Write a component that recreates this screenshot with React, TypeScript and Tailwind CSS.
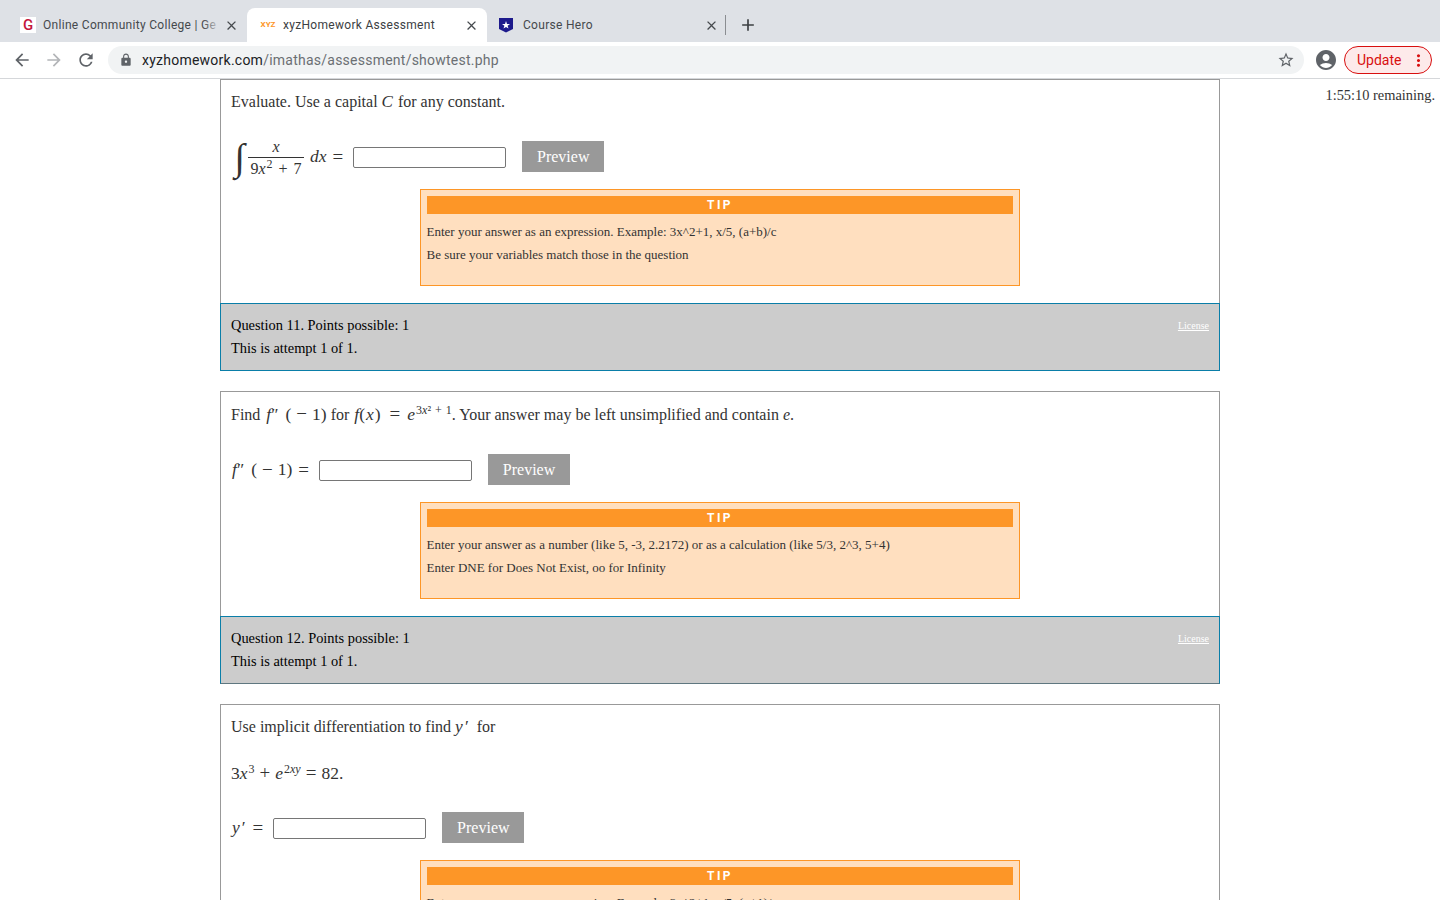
import { MdAccountCircle, MdAdd, MdArrowBack, MdArrowForward, MdClose, MdLock, MdMoreVert, MdRefresh, MdStarBorder } from "react-icons/md";
import type { ReactNode } from "react";

const V = ({ children }: { children: ReactNode }) => <i className="italic">{children}</i>;
const Sup = ({ children }: { children: ReactNode }) => (
  <span className="text-[12px] leading-none relative -top-[6px] ml-[1px]">{children}</span>
);
// operators in the math have the wide spacing of the typeset formula
const Op = ({ children }: { children: ReactNode }) => <span className="mx-[5px] text-[19px] leading-none">{children}</span>;

const Tip = ({ lines }: { lines: string[] }) => (
  <div className="mx-auto w-[600px] h-[97px] bg-[#ffdfbf] border border-[#fd9627] px-[6px] pt-[6px]">
    <div className="h-[18px] bg-[#fd9627] text-white text-center font-['Roboto',sans-serif] font-bold text-[12px] leading-[18px] tracking-[0.2em]">
      TIP
    </div>
    <div className="pt-[6px] -ml-[0.5px] text-[13px] leading-[23px] text-[#333]">
      {lines.map((l) => (
        <p key={l}>{l}</p>
      ))}
    </div>
  </div>
);

const Answer = ({ children }: { children: ReactNode }) => (
  <div className="flex items-center h-[31px]">
    <div className="flex items-center text-[17.5px] text-[#333] whitespace-nowrap">{children}</div>
    <div className="ml-[10px] mt-[2px] w-[153px] h-[21px] bg-white border border-[#767676] rounded-[2px]" />
    <button className="ml-[16px] w-[82px] h-[31px] bg-[#999] text-white text-[16px]">Preview</button>
  </div>
);

const QHeader = ({ n, border }: { n: number; border: string }) => (
  <div className={`-mt-px relative h-[68px] bg-[#ccc] border ${border} px-[10px] pt-[10px] text-[14.4px] leading-[23px] text-black`}>
    <div className="flex justify-between">
      <span>Question {n}. Points possible: 1</span>
      <a className="text-[10px] leading-[23px] text-white underline">License</a>
    </div>
    <div>This is attempt 1 of 1.</div>
  </div>
);

const Tab = ({ icon, title, active, fade }: { icon: ReactNode; title: string; active?: boolean; fade?: boolean }) => (
  <div className={`relative w-[240px] h-[34px] flex items-center pl-[13px] pr-[8px] rounded-t-[8px] ${active ? "bg-white" : ""}`}>
    <div className="w-[16px] h-[16px] shrink-0 flex items-center justify-center">{icon}</div>
    <span className={`ml-[7px] flex-1 overflow-hidden whitespace-nowrap text-[12px] tracking-[0.3px] ${active ? "text-[#3c4043]" : "text-[#45494d]"}`}>
      {title}
    </span>
    {fade && <span className="absolute right-[26px] w-[18px] h-[16px] bg-gradient-to-r from-transparent to-[#dee1e6]" />}
    <MdClose className="ml-[6px] shrink-0 text-[#45494d]" size={15} />
  </div>
);

export default function App() {
  return (
    <div className="w-[1440px] h-[900px] overflow-hidden bg-white font-['Liberation_Serif',serif]">
      {/* browser chrome */}
      <div className="h-[42px] bg-[#dee1e6] flex items-end pl-[7px] font-['Roboto',sans-serif]">
        <Tab
          title="Online Community College | Ge"
          fade
          icon={
            <div className="w-[16px] h-[16px] bg-white flex items-center justify-center text-[#c4163c] text-[15px] font-medium leading-none">G</div>
          }
        />
        <Tab
          active
          title="xyzHomework Assessment"
          icon={<span className="text-[8px] font-bold text-[#fd9627] leading-none">XYZ</span>}
        />
        <Tab
          title="Course Hero"
          icon={
            <svg className="-ml-[4px]" width="16" height="16" viewBox="0 0 16 16">
              <path d="M1 1 L15 1 L15 12 L8 15.5 L1 12 Z" fill="#1d1a8c" />
              <path d="M8 4 L9 7 L12 7 L9.6 8.8 L10.5 11.6 L8 9.9 L5.5 11.6 L6.4 8.8 L4 7 L7 7 Z" fill="#fff" />
            </svg>
          }
        />
        <div className="w-px h-[20px] bg-[#8a8d91] mb-[7px] -ml-[2px]" />
        <MdAdd className="ml-[12px] mb-[7px] text-[#3c4043]" size={20} />
      </div>
      <div className="h-[37px] bg-white border-b border-[#d5d7da] flex items-center pl-[12px] pr-[8px] font-['Roboto',sans-serif]">
        <MdArrowBack className="text-[#5f6368]" size={20} />
        <MdArrowForward className="ml-[12px] text-[#b3b5b8]" size={20} />
        <MdRefresh className="ml-[12px] text-[#5f6368]" size={20} />
        <div className="ml-[12px] flex-1 h-[28px] rounded-full bg-[#f1f3f4] flex items-center pl-[11px] pr-[9px]">
          <MdLock className="text-[#5f6368]" size={14} />
          <span className="ml-[9px] flex-1 text-[14px] tracking-[0.24px] text-[#6b6f73]">
            <span className="text-[#202124]">xyzhomework.com</span>/imathas/assessment/showtest.php
          </span>
          <MdStarBorder className="text-[#5f6368]" size={18} />
        </div>
        <MdAccountCircle className="ml-[10px] text-[#5f6368]" size={24} />
        <div className="ml-[6px] w-[88px] h-[28px] rounded-full bg-[#fdeaea] border border-[#d80f0f] flex items-center justify-between pl-[12px] pr-[3px] text-[14px] text-[#d80f0f]">
          Update
          <MdMoreVert size={19} />
        </div>
      </div>

      {/* page */}
      <div className="flex">
        <div className="w-[220px] shrink-0" />
        <div className="w-[1000px] shrink-0">
          {/* question 10 body */}
          <div className="h-[225px] border border-[#999] px-[10px]">
            <p className="pt-[12px] text-[16px] leading-[20px] text-[#333]">
              Evaluate. Use a capital <V><span className="text-[17px] mr-[1px]">C</span></V> for any constant.
            </p>
            <div className="mt-[29px]">
              <Answer>
                <span className="w-[17px] h-[31px] flex items-center justify-center text-[38px] leading-none italic">∫</span>
                <span className="inline-flex flex-col items-center w-[56px] text-[16px] leading-[20px] mt-[3px]">
                  <span className="border-b border-[#333] w-full text-center leading-[20px]">
                    <V>x</V>
                  </span>
                  <span className="leading-[22px] whitespace-nowrap">
                    9<V>x</V>
                    <Sup>2</Sup>
                    <span className="mx-[6px]">+</span>7
                  </span>
                </span>
                <span className="ml-[6px]">
                  <V>dx</V>
                </span>
                <span className="ml-[6px] text-[19px] leading-none">=</span>
              </Answer>
            </div>
            <div className="mt-[17px]">
              <Tip lines={["Enter your answer as an expression. Example: 3x^2+1, x/5, (a+b)/c", "Be sure your variables match those in the question"]} />
            </div>
          </div>
          <QHeader n={11} border="border-[#0a7ea8]" />

          {/* question 11 body */}
          <div className="mt-[20px] h-[226px] border border-[#999] px-[10px]">
            <p className="pt-[12px] h-[33px] text-[16px] leading-[20px] text-[#333] whitespace-nowrap">
              Find{" "}
              <span className="text-[17.5px] leading-none">
                <span className="ml-[2px] mr-[1px]"><V>f</V>″</span>
                <span className="ml-[6px]">(</span>
                <Op>−</Op>1)
              </span>{" "}
              for{" "}
              <span className="text-[17.5px] leading-none">
                <span className="ml-[1px]"><V>f</V></span>(<span className="mx-[1px]"><V>x</V></span>)
                <span className="ml-[9px] mr-[7px] text-[19px] leading-none">=</span>
                <V>e</V>
                <Sup>
                  3<V>x</V>²<span className="mx-[4px]">+</span>1
                </Sup>
              </span>
              . Your answer may be left unsimplified and contain <V>e</V>.
            </p>
            <div className="mt-[29px]">
              <Answer>
                <span className="ml-[1px]"><V>f</V>″</span>
                <span className="ml-[7px]">(</span>
                <Op>−</Op>
                <span>1)</span>
                <span className="ml-[6px] text-[19px] leading-none">=</span>
              </Answer>
            </div>
            <div className="mt-[17px]">
              <Tip lines={["Enter your answer as a number (like 5, -3, 2.2172) or as a calculation (like 5/3, 2^3, 5+4)", "Enter DNE for Does Not Exist, oo for Infinity"]} />
            </div>
          </div>
          <QHeader n={12} border="border-[#0a7ea8] border-b-[#5f7780]" />

          {/* question 12 body */}
          <div className="mt-[20px] h-[300px] border border-[#999] px-[10px]">
            <p className="pt-[12px] h-[32px] text-[16px] leading-[20px] text-[#333]">
              Use implicit differentiation to find{" "}
              <span className="text-[17.5px] leading-none"><V>y</V><span className="ml-[2px]">′</span></span>
              <span className="ml-[8px]">for</span>
            </p>
            <p className="mt-[26px] h-[20px] text-[17.5px] leading-[20px] text-[#333]">
              3<V>x</V>
              <Sup>3</Sup>
              <Op>+</Op>
              <V>e</V>
              <Sup>
                2<V>xy</V>
              </Sup>
              <Op>=</Op>
              82.
            </p>
            <div className="mt-[29px]">
              <Answer>
                <span className="ml-[1px]"><V>y</V></span>
                <span className="ml-[2px]">′</span>
                <span className="ml-[7px] text-[19px] leading-none">=</span>
              </Answer>
            </div>
            <div className="mt-[17px]">
              <Tip lines={["Enter your answer as an expression. Example: 3x^2+1, x/5, (x+1)/c"]} />
            </div>
          </div>
        </div>
        <div className="flex-1 pt-[7px] pr-[5px] text-right text-[14.4px] leading-[18px] text-[#333] whitespace-nowrap">
          1:55:10 remaining.
        </div>
      </div>
    </div>
  );
}
